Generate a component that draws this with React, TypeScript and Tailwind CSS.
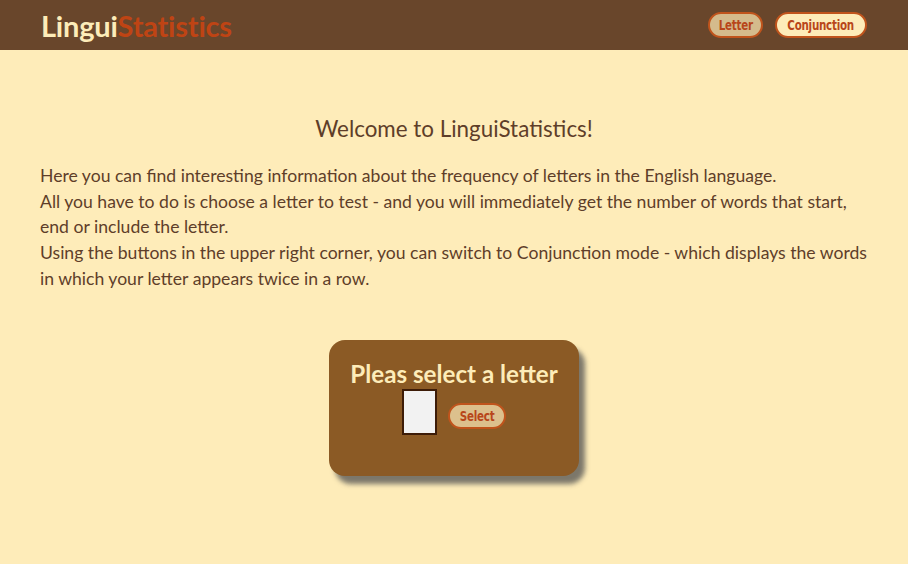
import React, { useState } from 'react';

// Pill button used in header and card
const PillButton = ({ children, active = false, className = '' }) => (
  <button
    className={`rounded-full border-2 border-[#c0541c] text-[14px] font-bold leading-[22px] text-[#b8461a] ${
      active ? 'bg-[#fdecb9]' : 'bg-[#d4bb8c]'
    } ${className}`}
    style={{ fontFamily: '"DejaVu Sans Condensed", "DejaVu Sans", sans-serif', fontStretch: 'condensed' }}
  >
    <span className="inline-block origin-center scale-x-[0.82] tracking-[-0.3px]">{children}</span>
  </button>
);

export default function App() {
  const [letter, setLetter] = useState('');

  return (
    <div className="min-h-[564px] bg-[#feecb9] text-[#5e3e29]" style={{ fontFamily: 'Lato, "Open Sans", sans-serif' }}>
      <header className="flex h-[50px] items-center justify-between bg-[#69462b] pl-[41px] pr-[41px]">
        <div className="text-[29px] font-bold leading-none tracking-[-0.2px]">
          <span className="text-[#fdecb9]">Lingui</span>
          <span className="text-[#bf4414]">Statistics</span>
        </div>
        <nav className="flex items-center gap-[12px]">
          <PillButton className="px-[4.5px]">Letter</PillButton>
          <PillButton active className="px-[3.5px]">Conjunction</PillButton>
        </nav>
      </header>

      <main className="px-[40px]">
        <h1 className="mt-[65px] text-center text-[22.4px] leading-[28px]">Welcome to LinguiStatistics!</h1>
        <p className="mt-[20px] text-[17.6px] leading-[25.7px]">
          Here you can find interesting information about the frequency of letters in the English language.
          <br />
          All you have to do is choose a letter to test - and you will immediately get the number of words that start,
          end or include the letter.
          <br />
          Using the buttons in the upper right corner, you can switch to Conjunction mode - which displays the words
          in which your letter appears twice in a row.
        </p>

        <div className="mt-[48px] flex justify-center">
          <div className="flex h-[136px] w-[250px] flex-col items-center rounded-[16px] bg-[#8b5a25] pt-[19px] shadow-[6px_8px_5px_rgba(80,80,80,0.75)]">
            <div className="text-[24.2px] font-bold leading-[30px] text-[#fdecb9]">Pleas select a letter</div>
            <div className="flex items-center gap-[11px]">
              <input
                value={letter}
                onChange={(e) => setLetter(e.target.value.slice(0, 1))}
                className="h-[46px] w-[35px] border-2 border-[#3d1c08] bg-[#f2f2f2] text-center text-[20px] outline-none"
              />
              <PillButton className="!bg-[#dcc08d] mt-[8px] px-[5.5px]">Select</PillButton>
            </div>
          </div>
        </div>
      </main>
    </div>
  );
}
